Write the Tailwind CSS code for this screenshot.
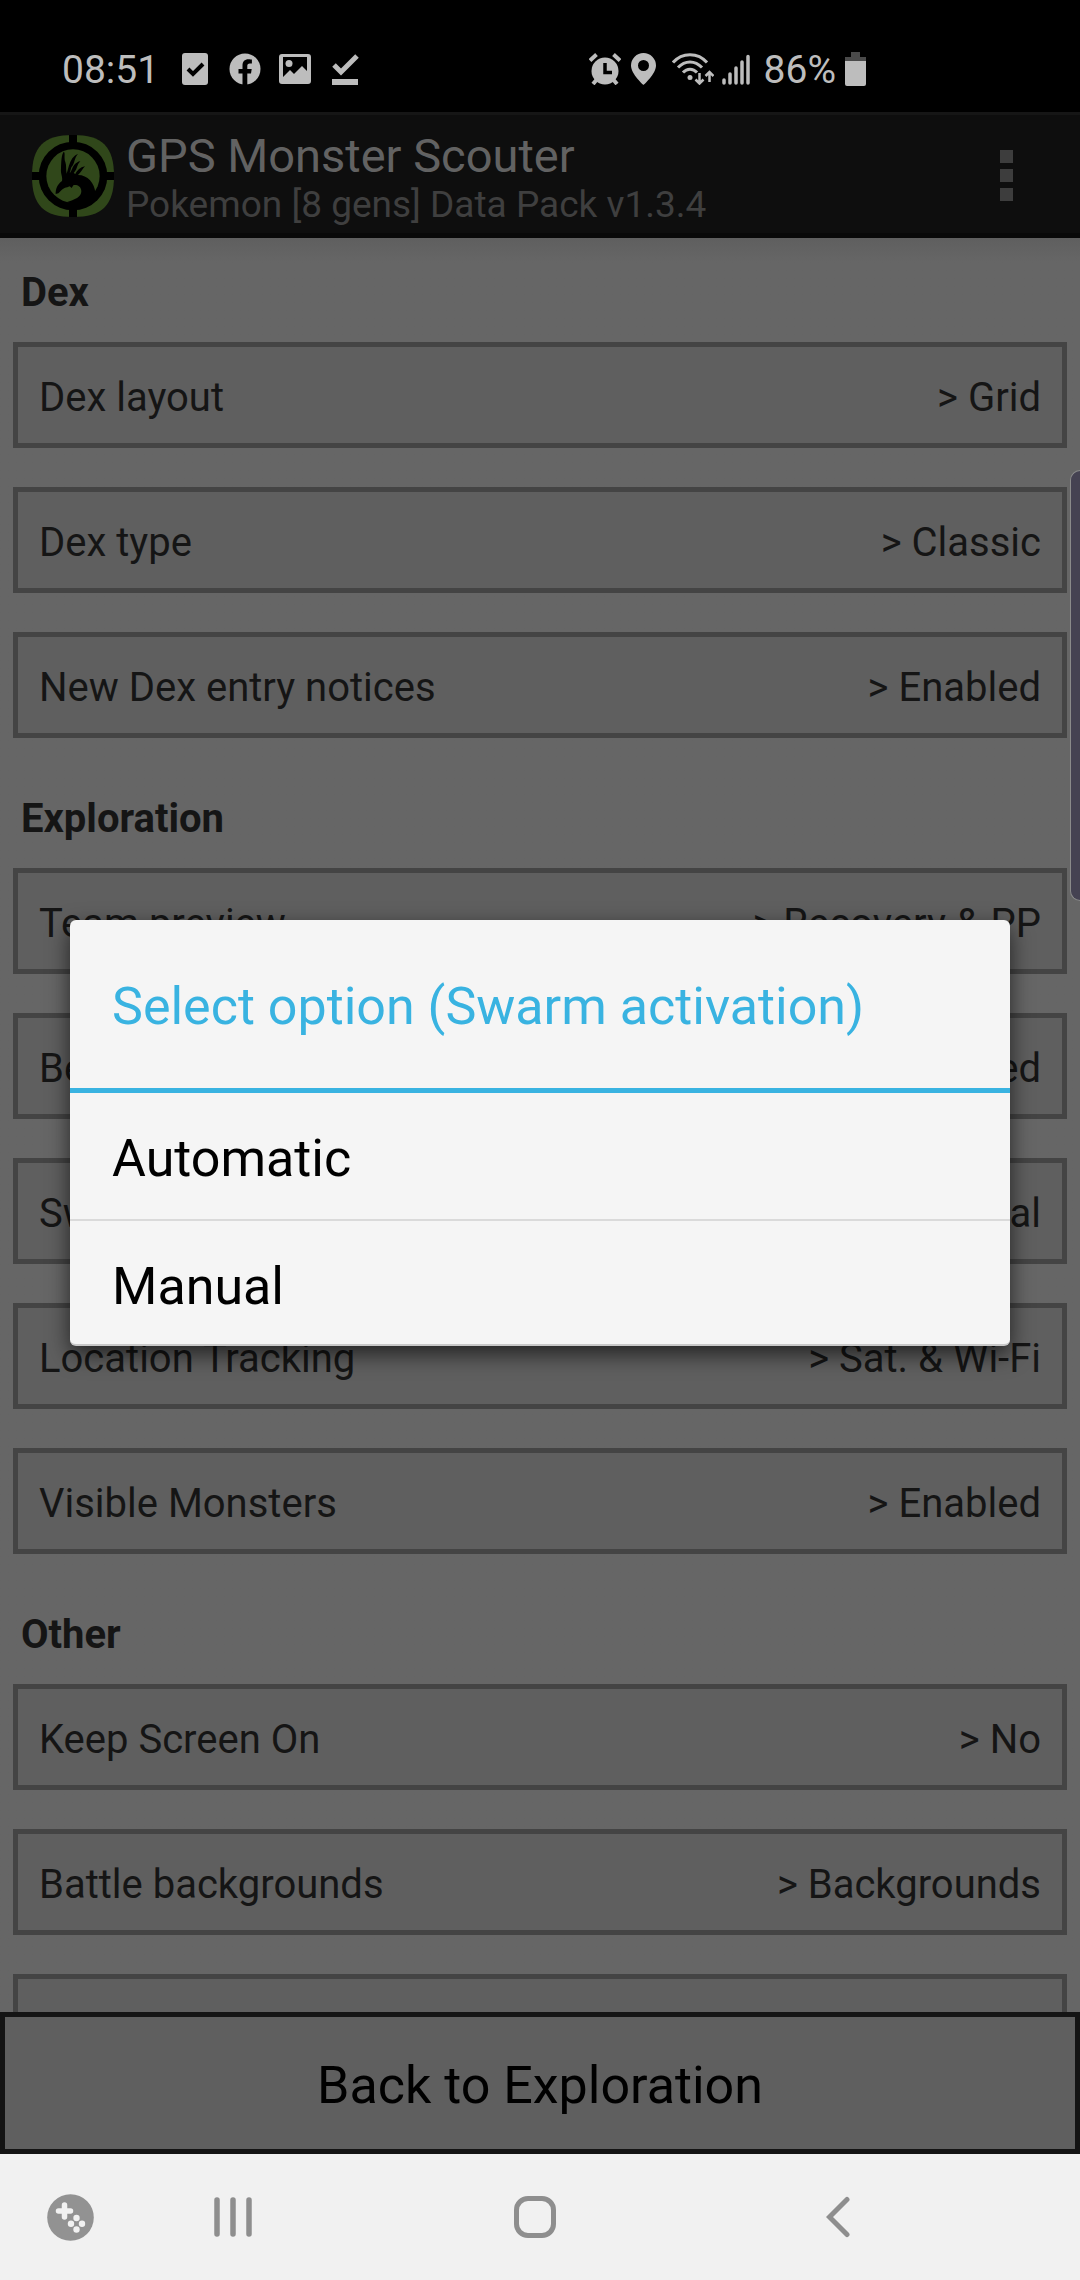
<!DOCTYPE html>
<html lang="en">
<head>
<meta charset="UTF-8">
<meta name="viewport" content="width=device-width, initial-scale=1.0">
<title>GPS Monster Scouter</title>
<script src="https://cdn.jsdelivr.net/npm/@tailwindcss/browser@4"></script>
</head>
<body class="bg-[#666666] font-['Roboto',sans-serif]">

<div class="flex h-screen flex-col overflow-hidden">

  <!-- Status bar -->
  <div class="flex h-28 shrink-0 items-center justify-between bg-black pt-[26px] pr-[214px] pl-[62px] text-[39px] leading-[46px] text-[#bdbdbd]">
    <div class="flex items-center">
      <span class="mr-5 pt-[2px]">08:51</span>
      <div class="flex gap-[18px]">
        <svg class="size-8" viewBox="0 0 32 32"><rect x="3" y="0" width="26" height="32" rx="3" fill="#bdbdbd"/><path d="M9 16l5 5 10-10" fill="none" stroke="#000" stroke-width="4"/></svg>
        <svg class="size-8" viewBox="0 0 32 32"><circle cx="16" cy="16" r="15.5" fill="#bdbdbd"/><path d="M13.5 32V20.500H9.500V16h4v-3.500c0-4 2.300-6.200 5.900-6.200 1.700 0 3.500.3 3.500.3v3.900h-2c-2 0-2.600 1.200-2.600 2.500V16h4.400l-.7 4.500h-3.700V32z" fill="#000"/></svg>
        <svg class="size-8" viewBox="0 0 32 32"><path d="M3 1h26a3 3 0 0 1 3 3v24a3 3 0 0 1-3 3H3a3 3 0 0 1-3-3V4a3 3 0 0 1 3-3zm1 3v20l7-7 4 4 8-8 5 5V4z" fill="#bdbdbd" fill-rule="evenodd"/><circle cx="10" cy="10.500" r="3.500" fill="#bdbdbd"/></svg>
        <svg class="size-8" viewBox="0 0 32 32"><path d="M5 12l7 7L28 3" fill="none" stroke="#bdbdbd" stroke-width="5"/><path d="M3 26h26v6H3z" fill="#bdbdbd"/></svg>
      </div>
    </div>
    <div class="flex items-center">
      <svg class="mr-[10px] size-8" viewBox="0 0 32 32"><circle cx="16" cy="18" r="13.500" fill="#bdbdbd"/><path d="M1 7.500L7.500 1.500M31 7.500L24.500 1.500M4 31l5-6M28 31l-5-6" stroke="#bdbdbd" stroke-width="4"/><path d="M16 10v9.500h7" fill="none" stroke="#000" stroke-width="3.500"/></svg>
      <svg class="mr-4 h-8 w-[25px]" viewBox="0 0 25 32"><path d="M12.500 0A12.500 12.500 0 0 0 0 12.500C0 21 12.500 32 12.500 32S25 21 25 12.500A12.500 12.500 0 0 0 12.500 0zm0 7a5.500 5.500 0 1 1 0 11 5.500 5.500 0 0 1 0-11z" fill="#bdbdbd" fill-rule="evenodd"/></svg>
      <svg class="mr-2 h-8 w-[42px]" viewBox="0 0 42 32"><g fill="none" stroke="#bdbdbd" stroke-width="3"><path d="M1 9.500C10-1 26-1 35 9.500M6 14.500c7-7.500 17-7.500 24 0M11 19.500c4-4.500 10-4.500 14 0"/><path d="M27.500 20v10M23.500 26.500l4 4 4-4M37.500 29V19M33.500 23l4-4 4 4" stroke-width="2.500"/></g><circle cx="18" cy="24.500" r="2.500" fill="#bdbdbd"/></svg>
      <svg class="mr-[14px] h-8 w-[28px]" viewBox="0 0 28 32"><path d="M2 27v3M8 21v9M14 15v15M20 9v21M26 3.500V30" stroke="#bdbdbd" stroke-width="3.500" stroke-linecap="round"/></svg>
      <span class="mr-[9px] pt-[2px]">86%</span>
      <svg class="h-[34px] w-[21px]" viewBox="0 0 21 34"><path d="M6 0h9v5h6v4H0V5h6z" fill="#4a4a4a"/><path d="M0 9h21v23a2 2 0 0 1-2 2H2a2 2 0 0 1-2-2z" fill="#bdbdbd"/></svg>
    </div>
  </div>

  <div class="relative flex min-h-0 flex-1 flex-col">

    <!-- Action bar -->
    <header class="flex shrink-0 items-center border-t-3 border-b-5 border-t-[#161616] border-b-[#090909] bg-[#0e0e0e] pt-[10px] pb-[7px] pl-8">
      <svg class="mr-3 size-[82px]" viewBox="36 42 246 246">
        <path d="M159 42c88 0 123 35 123 123s-35 123-123 123S36 253 36 165 71 42 159 42z" fill="#30471a"/>
        <path d="M147 42h24v246h-24zM36 153h246v24H36z"/>
        <circle cx="159" cy="165" r="103"/>
        <circle cx="159" cy="165" r="80" fill="#30471a"/>
        <path d="M107 219C107 204 112 190 126 180C129 168 121 160 123 142C124 122 124 102 131 92C137 94 131 110 136 123C140 134 137 145 140 158C145 142 148 125 157 112Q165 101 174 98C161 115 166 124 154 139L149 157C158 145 157 133 170 125Q176 121 181 121C169 133 174 142 161 156L166 159C172 148 180 139 195 136C186 145 184 154 174 162C203 162 224 186 226 216L232 225Q208 263 139 244C165 236 184 228 184 211C184 195 168 190 160 193L155 201L149 196L142 199C130 199 122 212 115 217Z"/>
      </svg>
      <div class="flex-1 pt-[3px]">
        <h1 class="text-[47px] leading-[55px] text-[#626262]">GPS Monster Scouter</h1>
        <p class="text-[37px] leading-[43px] text-[#3f3f3f]">Pokemon [8 gens] Data Pack v1.3.4</p>
      </div>
      <button aria-label="More options" class="flex flex-col items-center gap-[6px] px-[67px]">
        <span class="size-[13px] bg-[#3d3d3d]"></span>
        <span class="size-[13px] bg-[#3d3d3d]"></span>
        <span class="size-[13px] bg-[#3d3d3d]"></span>
      </button>
    </header>

    <!-- Settings list -->
    <main class="min-h-0 flex-1 overflow-hidden bg-linear-to-b from-[#5f5f5f] to-[#666666] to-[24px] px-[13px] pt-[13px] text-[40px] leading-[46px] text-[#151515]">
      <section>
        <h2 class="pt-[19px] pb-[26px] pl-2 font-bold">Dex</h2>
        <button class="mb-[39px] flex w-full justify-between border-5 border-[#444444] bg-[#5f5f5f] px-[21px] pt-7 pb-[22px]"><span>Dex layout</span><span>&gt; Grid</span></button>
        <button class="mb-[39px] flex w-full justify-between border-5 border-[#444444] bg-[#5f5f5f] px-[21px] pt-7 pb-[22px]"><span>Dex type</span><span>&gt; Classic</span></button>
        <button class="mb-[39px] flex w-full justify-between border-5 border-[#444444] bg-[#5f5f5f] px-[21px] pt-7 pb-[22px]"><span>New Dex entry notices</span><span>&gt; Enabled</span></button>
      </section>
      <section>
        <h2 class="pt-[19px] pb-[26px] pl-2 font-bold">Exploration</h2>
        <button class="mb-[39px] flex w-full justify-between border-5 border-[#444444] bg-[#5f5f5f] px-[21px] pt-7 pb-[22px]"><span>Team preview</span><span>&gt; Recovery &amp; PP</span></button>
        <button class="mb-[39px] flex w-full justify-between border-5 border-[#444444] bg-[#5f5f5f] px-[21px] pt-7 pb-[22px]"><span>Berries</span><span>&gt; Enabled</span></button>
        <button class="mb-[39px] flex w-full justify-between border-5 border-[#444444] bg-[#5f5f5f] px-[21px] pt-7 pb-[22px]"><span>Swarm activation</span><span>&gt; Manual</span></button>
        <button class="mb-[39px] flex w-full justify-between border-5 border-[#444444] bg-[#5f5f5f] px-[21px] pt-7 pb-[22px]"><span>Location Tracking</span><span>&gt; Sat. &amp; Wi-Fi</span></button>
        <button class="mb-[39px] flex w-full justify-between border-5 border-[#444444] bg-[#5f5f5f] px-[21px] pt-7 pb-[22px]"><span>Visible Monsters</span><span>&gt; Enabled</span></button>
      </section>
      <section>
        <h2 class="pt-[19px] pb-[26px] pl-2 font-bold">Other</h2>
        <button class="mb-[39px] flex w-full justify-between border-5 border-[#444444] bg-[#5f5f5f] px-[21px] pt-7 pb-[22px]"><span>Keep Screen On</span><span>&gt; No</span></button>
        <button class="mb-[39px] flex w-full justify-between border-5 border-[#444444] bg-[#5f5f5f] px-[21px] pt-7 pb-[22px]"><span>Battle backgrounds</span><span>&gt; Backgrounds</span></button>
        <button aria-label="More settings" class="flex min-h-[106px] w-full border-5 border-[#444444] bg-[#5f5f5f]"></button>
      </section>
    </main>

    <button class="shrink-0 border-5 border-[#141414] bg-[#5f5f5f] pt-[38px] pb-[33px] text-[52px] leading-[61px] text-black">Back to Exploration</button>

    <!-- Edge panel handle -->
    <div class="absolute top-[358px] right-0 h-[431px] w-[10px] rounded-l-[10px] border border-r-0 border-[#8a8a8a] bg-[#454252]"></div>

    <!-- Option dialog -->
    <div class="absolute inset-0 flex items-center px-[70px]">
      <div role="dialog" aria-labelledby="dialogTitle" class="w-full rounded-[6px] border-b-2 border-[#c8c8c8] bg-[#f5f5f5] text-[52px] leading-[61px] text-black shadow-[0_8px_22px_rgba(0,0,0,0.65)]">
        <h2 id="dialogTitle" class="border-b-5 border-[#39b3e1] px-[42px] pt-[56px] pb-[51px] text-[#39b3e1]">Select option (Swarm activation)</h2>
        <ul>
          <li class="border-b-2 border-[#dadada]"><button class="w-full px-[42px] pt-[35px] pb-[30px] text-left">Automatic</button></li>
          <li><button class="w-full px-[42px] pt-[35px] pb-[27px] text-left">Manual</button></li>
        </ul>
      </div>
    </div>
  </div>

  <!-- Navigation bar -->
  <nav class="grid h-[126px] shrink-0 grid-cols-[141fr_184fr_420fr_185fr_150fr] items-center justify-items-center bg-[#f1f1f1]">
    <button aria-label="Game tools">
      <svg class="size-[47px]" viewBox="0 0 47 47"><circle cx="23.500" cy="23.500" r="23.300" fill="#929292"/><path d="M17.500 11v12M11.500 17h12" stroke="#f1f1f1" stroke-width="5.500" stroke-linecap="round"/><g fill="#f1f1f1"><circle cx="29.500" cy="24" r="3.200"/><circle cx="24" cy="29.700" r="3.200"/><circle cx="35" cy="29.700" r="3.200"/><circle cx="29.500" cy="35.500" r="3.200"/></g></svg>
    </button>
    <button aria-label="Recent apps">
      <svg class="h-[42px] w-[38px]" viewBox="0 0 38 42"><path d="M3 4v34M19 4v34M35 4v34" stroke="#8e8e8e" stroke-width="5.500" stroke-linecap="round"/></svg>
    </button>
    <button aria-label="Home">
      <svg class="size-[42px]" viewBox="0 0 42 42"><rect x="2.500" y="2.500" width="37" height="37" rx="11.500" fill="none" stroke="#8e8e8e" stroke-width="5"/></svg>
    </button>
    <button aria-label="Back">
      <svg class="h-[42px] w-[24px]" viewBox="0 0 24 42"><path d="M21 3.500L3.500 21 21 38.500" fill="none" stroke="#8e8e8e" stroke-width="5" stroke-linecap="round"/></svg>
    </button>
  </nav>
</div>

</body>
</html>
